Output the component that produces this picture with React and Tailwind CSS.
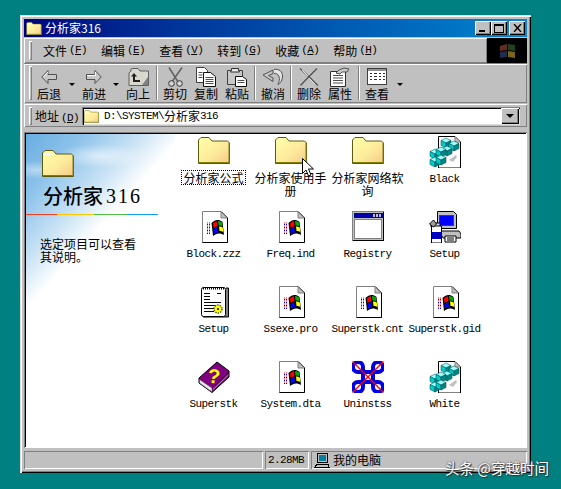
import React from "react";

const CJK = "font-['Noto_Sans_CJK_SC',sans-serif]";
const raised = "shadow-[inset_1px_1px_0_#fff,inset_-1px_-1px_0_#808080]";
const sunken = "shadow-[inset_1px_1px_0_#808080,inset_-1px_-1px_0_#fff]";

// latin text in the old bitmap-ish look
const L = ({ children, className = "" }) => (
  <span className={`font-['Liberation_Mono',monospace] text-[11px] tracking-[-0.6px] ${className}`}>{children}</span>
);

const FolderIcon = ({ w = 32, h = 27, id = "f" }) => (
  <svg width={w} height={h} viewBox="0 0 32 27">
    <defs>
      <linearGradient id={id} x1="0" y1="0" x2="1" y2="1">
        <stop offset="0" stopColor="#ffffa8" />
        <stop offset="0.55" stopColor="#fdeb9c" />
        <stop offset="1" stopColor="#f6c98a" />
      </linearGradient>
    </defs>
    <path d="M.5 26.5V3L3 .5h8l3 3.500h15.500l2 2v20.500z" fill={`url(#${id})`} stroke="#5a5a10" />
    <path d="M1 25.500h30M31 6v20" stroke="#808000" />
    <path d="M1.500 4.500h9" stroke="#fff" />
  </svg>
);

const Flag = () => (
  <g>
    <path d="M5 11h3M5 14h3M5 17h3M5 20h3" stroke="#f00" strokeWidth="1" strokeDasharray="1 1" />
    <path d="M5 12.500h4M5 15.500h4M5 18.500h4M5 21.500h4" stroke="#00f" strokeWidth="1" strokeDasharray="1 1" />
    <path d="M9.500 11c2-2 4-3 6-3s3 .5 5 2l1.500 13c-2-1-3-1.500-5-1.500s-4 1-6 2.500z" fill="#000" />
    <path d="M11 11.500c1-1 2-1.800 4-2.200l.5 5c-1.500 .3-3 1-4 1.700z" fill="#f00" />
    <path d="M16 9c1.500 0 2.500 .5 4 1.500l.5 4c-1.500-.8-2.500-1-4-1z" fill="#0a0" />
    <path d="M11.500 17c1-.8 2.500-1.300 4-1.700l.5 5c-1.500 .2-3 .8-4 1.500z" fill="#00f" />
    <path d="M17 14.500c1.500 0 2.500 .3 3.800 1l.5 4.500c-1.300-.6-2.300-1-3.800-1z" fill="#ff0" />
  </g>
);

const DocIcon = () => (
  <svg width="32" height="32" viewBox="0 0 32 32">
    <path d="M4.500 .5H23L29.500 7v24.500H4.500z" fill="#fff" stroke="#808080" />
    <path d="M29.500 7v24.500H4.500M23 .5L29.500 7" stroke="#000" fill="none" />
    <path d="M23 1v6h6" fill="#c0c0c0" stroke="#808080" />
    <g transform="translate(4 1)"><Flag /></g>
  </svg>
);

const Cube = ({ x, y }) => (
  <g transform={`translate(${x} ${y})`}>
    <path d="M5 0l5 2.500L5 5 0 2.500z" fill="#9ff" stroke="#004040" strokeWidth=".5" />
    <path d="M0 2.500L5 5v5L0 7.500z" fill="#0cc" stroke="#004040" strokeWidth=".5" />
    <path d="M10 2.500L5 5v5l5-2.500z" fill="#088" stroke="#004040" strokeWidth=".5" />
  </g>
);

const RegIcon = () => (
  <svg width="32" height="32" viewBox="0 0 32 32">
    <path d="M9.500 .5H26L31.500 6v26H9.500z" fill="#fff" stroke="#000" />
    <path d="M26 1v5h5" fill="#c0c0c0" stroke="#808080" />
    <path d="M20 24l7-5 1 2-4 5z" fill="#c0c0c0" />
    <Cube x={12} y={2} />
    <Cube x={20} y={5} />
    <Cube x={13} y={10} />
    <Cube x={1} y={13} />
    <Cube x={7} y={11} />
    <Cube x={1} y={21} />
    <Cube x={7} y={19} />
  </svg>
);

const WindowIcon = () => (
  <svg width="32" height="32" viewBox="0 0 32 32" shapeRendering="crispEdges">
    <rect x=".5" y=".5" width="31" height="29" fill="#c0c0c0" stroke="#808080" />
    <rect x="1.500" y="2" width="29" height="5" fill="#0000a8" />
    <rect x="21" y="3" width="2" height="3" fill="#c0c0c0" />
    <rect x="24" y="3" width="2" height="3" fill="#c0c0c0" />
    <rect x="27" y="3" width="2" height="3" fill="#c0c0c0" />
    <rect x="2.500" y="8.500" width="27" height="19" fill="#fff" stroke="#808080" />
    <path d="M31.500 1v29M1 29.500h31" stroke="#000" />
  </svg>
);

const SetupPcIcon = () => (
  <svg width="32" height="32" viewBox="0 0 32 32">
    <path d="M8.500 .5h16l3 3v14h-19z" fill="#c0c0c0" stroke="#000" />
    <rect x="10.500" y="4.500" width="14" height="10" fill="#0000ff" stroke="#404040" />
    <path d="M10 20h20l2 3v4H14z" fill="#c0c0c0" stroke="#000" />
    <path d="M16 25h11v6H16z" fill="#fff" stroke="#000" />
    <path d="M18 27h7M18 29h7" stroke="#000" />
    <path d="M2 12h9v4H2z" fill="#d8d8d8" stroke="#000" />
    <path d="M2.500 15h10v17H2.500z" fill="#fff" stroke="#000" />
    <path d="M3 21h9v7H3z" fill="#0000c0" />
    <path d="M0.500 13l4-4 3 4-3 3z" fill="#a0a0a0" stroke="#000" />
  </svg>
);

const NoteIcon = () => (
  <svg width="32" height="32" viewBox="0 0 32 32">
    <path d="M28 2h2.500v29H5" fill="#808080" stroke="#000" />
    <rect x="3.500" y="1.500" width="24" height="29" rx="2" fill="#fff" stroke="#000" />
    <path d="M5 2.500h21" stroke="#000" strokeDasharray="1 1" strokeWidth="2" />
    <path d="M6 7.500h6M19 7.500h4M6 10.500h6M6 13.500h6M6 16.500h17M6 19.500h12M6 22.500h10M6 25.500h10" stroke="#000" />
    <circle cx="20" cy="23" r="4" fill="#ff0" stroke="#606000" strokeDasharray="1.500 1" strokeWidth="1.500" />
    <circle cx="20" cy="23" r="1" fill="#000" />
  </svg>
);

const BookIcon = () => (
  <svg width="32" height="32" viewBox="0 0 32 32">
    <path d="M1 17L19 1l12 9v6L14 31.500 1 22z" fill="#800080" stroke="#000" />
    <path d="M1.500 18.500l12.500 8.500v4L1.500 22z" fill="#e8e8e8" stroke="#404040" strokeWidth=".5" />
    <path d="M14 27l17-16" stroke="#300030" />
    <path d="M15 28.500L30.500 14" stroke="#c080c0" />
    <text x="10" y="22" fill="#ffff00" fontFamily="Liberation Sans, sans-serif" fontWeight="700" fontSize="20" transform="rotate(6 15 14)">?</text>
  </svg>
);

const KnotIcon = () => (
  <svg width="32" height="32" viewBox="0 0 32 32">
    <g fill="none" stroke="#0000e0" strokeWidth="4">
      <path d="M11 6v20M21 6v20M6 11h20M6 21h20" />
      <path d="M11 6a5 5 0 1 0-5 5M21 6a5 5 0 1 1 5 5M11 26a5 5 0 1 1-5-5M21 26a5 5 0 1 0 5-5" />
    </g>
    <path d="M.5 .5l31 31M31.500 .5l-31 31" stroke="#ff0000" strokeWidth="1.400" />
  </svg>
);

const tools = {
  back: (
    <svg width="16" height="14" viewBox="0 0 16 14">
      <path d="M7 .5L.8 7 7 13.500V9.500h8.500v-5H7z" fill="#c8c8c8" stroke="#505050" />
      <path d="M7 2L2.500 7" stroke="#fff" />
    </svg>
  ),
  forward: (
    <svg width="16" height="14" viewBox="0 0 16 14">
      <path d="M9 .5L15.200 7 9 13.500V9.500H.5v-5H9z" fill="#c8c8c8" stroke="#505050" />
      <path d="M1 5.500h8.500V2" stroke="#fff" fill="none" />
    </svg>
  ),
  up: (
    <svg width="21" height="18" viewBox="0 0 21 18">
      <path d="M1 17.500V5l2-2V1l2-.5h5L12 3h8.500v14.500z" fill="#d8d8cc" stroke="#606060" />
      <path d="M14 17l6-8v8z" fill="#808080" />
      <path d="M6 5L3 8.500h2V14h7v-2H7V8.500h2z" fill="#202020" />
    </svg>
  ),
  cut: (
    <svg width="17" height="20" viewBox="0 0 17 20">
      <path d="M2 .5l8.500 13.500M15 .5L5.500 14" stroke="#606060" strokeWidth="1.500" fill="none" />
      <circle cx="4.500" cy="16.500" r="2.800" fill="#d8d8d8" stroke="#303030" />
      <circle cx="12.500" cy="16.500" r="2.800" fill="#d8d8d8" stroke="#303030" />
    </svg>
  ),
  copy: (
    <svg width="20" height="20" viewBox="0 0 20 20">
      <path d="M.5 .5h8l3 3v12H.5z" fill="#fff" stroke="#404040" />
      <path d="M7.500 5.500h7l5 4v10h-12z" fill="#fff" stroke="#101010" />
      <path d="M2.500 5.500h4M2.500 8h4M2.500 10.500h4M9.500 10.500h8M9.500 12.500h8M9.500 14.500h8M9.500 16.500h8" stroke="#505050" />
    </svg>
  ),
  paste: (
    <svg width="20" height="20" viewBox="0 0 20 20">
      <path d="M.5 3.500h15v14H.5z" fill="#c8c8c8" stroke="#404040" />
      <path d="M4.500 3V1.500h7V3l1 2h-9z" fill="#e8e8e8" stroke="#303030" />
      <path d="M8.500 9.500h7l4 3v7H8.500z" fill="#fff" stroke="#101010" />
      <path d="M10.500 13.500h7M10.500 15.500h7" stroke="#505050" />
    </svg>
  ),
  undo: (
    <svg width="22" height="18" viewBox="0 0 22 18">
      <path d="M12 1.500c5-1 8.500 2 8.500 6.500s-2 7-4.500 8.500c1-3 2-5 1-8-1-2.500-3-3.500-5-3" fill="#e4e4e4" stroke="#505050" />
      <path d="M1 7l10-5v3.500L6.500 7.500 11 10v3.500z" fill="#c8c8c8" stroke="#505050" />
    </svg>
  ),
  del: (
    <svg width="20" height="18" viewBox="0 0 20 18">
      <path d="M1 .5l9 8.200 9 8.800M18 .5L10 8.500 1.500 17.500" stroke="#505050" strokeWidth="1.200" fill="none" />
      <path d="M3 2l6 6M10 10l6 6" stroke="#e0e0e0" fill="none" />
    </svg>
  ),
  props: (
    <svg width="20" height="20" viewBox="0 0 20 20">
      <path d="M.5 4.500h15v15H.5z" fill="#fff" stroke="#303030" />
      <path d="M3 8.500h10M3 11h10M3 13.500h10M3 16h10" stroke="#505050" />
      <path d="M6 6l3-3 5-2 5 1-2 3-5 0-2 2z" fill="#c8c8c8" stroke="#505050" />
    </svg>
  ),
  views: (
    <svg width="20" height="18" viewBox="0 0 20 18" shapeRendering="crispEdges">
      <rect x=".5" y=".5" width="19" height="16" fill="#fff" stroke="#404040" />
      <rect x="1" y="1" width="18" height="2" fill="#909090" />
      <path d="M3 5.500h2M7 5.500h3M12 5.500h2M16 5.500h2M3 8.500h2M7 8.500h3M12 8.500h2M16 8.500h2M3 11.500h2M7 11.500h3M12 11.500h2M16 11.500h2" stroke="#303030" />
    </svg>
  ),
};

const Grip = ({ className = "" }) => (
  <div className={`w-[3px] shrink-0 ${raised} ${className}`} />
);

const Caret = ({ className = "" }) => (
  <div className={`w-0 h-0 border-x-[3px] border-x-transparent border-t-[3px] border-t-black ${className}`} />
);

const Sep = ({ w }) => (
  <div className={`${w} flex justify-center shrink-0`}>
    <div className="w-[2px] h-[34px] border-l border-l-[#808080] border-r border-r-white" />
  </div>
);

const ToolBtn = ({ w, icon, label }) => (
  <div className={`${w} flex flex-col items-center shrink-0`}>
    <div className="h-[22px] flex items-center justify-center">{tools[icon]}</div>
    <div className="text-[12px] leading-[13px] -mt-[1px] text-black">{label}</div>
  </div>
);

const DropArrow = ({ w }) => (
  <div className={`${w} flex justify-center pt-[17px] shrink-0`}>
    <Caret />
  </div>
);

const menus = [
  ["文件", "F"],
  ["编辑", "E"],
  ["查看", "V"],
  ["转到", "G"],
  ["收藏", "A"],
  ["帮助", "H"],
];

const files = [
  { name: "分析家公式", icon: "folder", selected: true },
  { name: "分析家使用手册", icon: "folder" },
  { name: "分析家网络软询", icon: "folder" },
  { name: "Black", icon: "reg" },
  { name: "Block.zzz", icon: "doc" },
  { name: "Freq.ind", icon: "doc" },
  { name: "Registry", icon: "window" },
  { name: "Setup", icon: "pc" },
  { name: "Setup", icon: "note" },
  { name: "Ssexe.pro", icon: "doc" },
  { name: "Superstk.cnt", icon: "doc" },
  { name: "Superstk.gid", icon: "doc" },
  { name: "Superstk", icon: "book" },
  { name: "System.dta", icon: "doc" },
  { name: "Uninstss", icon: "knot" },
  { name: "White", icon: "reg" },
];

const FileIcon = ({ type, index }) => {
  if (type === "folder")
    return (
      <div className="pt-[1px]">
        <FolderIcon id={`folder-${index}`} />
      </div>
    );
  if (type === "doc") return <DocIcon />;
  if (type === "reg") return <RegIcon />;
  if (type === "window") return <WindowIcon />;
  if (type === "pc") return <SetupPcIcon />;
  if (type === "note") return <NoteIcon />;
  if (type === "book") return <BookIcon />;
  return <KnotIcon />;
};

const FileItem = ({ file, index }) => {
  const latin = /^[A-Za-z.]+$/.test(file.name);
  return (
    <div className="flex flex-col items-center h-[75px] pt-[1px]">
      <div className="h-[32px] flex items-start justify-center">
        <FileIcon type={file.icon} index={index} />
      </div>
      <div
        className={`text-center leading-[13px] text-[12px] text-black ${
          file.selected ? "outline-1 outline-dotted outline-black px-[1px]" : ""
        } ${latin ? "mt-[2px]" : "mt-[3px] max-w-[74px]"}`}
      >
        {latin ? <L>{file.name}</L> : file.name}
      </div>
    </div>
  );
};

export default function App() {
  return (
    <div className={`relative w-[561px] h-[489px] overflow-hidden bg-[#008080] pt-[15px] pl-[20px] ${CJK}`}>
      <div className="w-[511px] h-[458px] bg-[#c0c0c0] p-[4px] flex flex-col shadow-[inset_1px_1px_0_#dfdfdf,inset_2px_2px_0_#fff,inset_-1px_-1px_0_#000,inset_-2px_-2px_0_#808080]">
        {/* title bar */}
        <div className="h-[18px] shrink-0 flex items-center pl-[2px] pr-[2px] bg-gradient-to-r from-[#000080] to-[#1084d0]">
          <FolderIcon w={16} h={13} id="title-folder" />
          <span className="ml-[3px] text-white text-[12px] leading-none">分析家316</span>
          <div className="ml-auto flex">
            {["min", "max", "close"].map((b) => (
              <div
                key={b}
                className={`w-[16px] h-[14px] bg-[#c0c0c0] flex items-center justify-center ${
                  b === "close" ? "ml-[2px]" : ""
                } shadow-[inset_1px_1px_0_#fff,inset_-1px_-1px_0_#000,inset_-2px_-2px_0_#808080]`}
              >
                {b === "min" && <div className="w-[6px] h-[2px] bg-black mt-[6px] -ml-[2px]" />}
                {b === "max" && <div className="w-[10px] h-[9px] border border-black border-t-2" />}
                {b === "close" && (
                  <svg width="9" height="8" viewBox="0 0 9 8">
                    <path d="M1 0l7 8M8 0L1 8" stroke="#000" strokeWidth="1.400" />
                  </svg>
                )}
              </div>
            ))}
          </div>
        </div>

        {/* menu bar */}
        <div className="h-[26px] shrink-0 mt-[1px] flex border-b border-b-[#808080]">
          <div className={`flex-1 flex items-center pl-[5px] ${raised}`}>
            <Grip className="h-[19px]" />
            <div className="flex gap-[14px] ml-[11px]">
              {menus.map(([name, key]) => (
                <div key={key} className="text-[12px] text-black flex items-center whitespace-nowrap">
                  {name}
                  <L className="ml-[2px]">
                    (<span className="underline">{key}</span>)
                  </L>
                </div>
              ))}
            </div>
          </div>
          <div className="w-[40px] h-[25px] bg-black flex items-center justify-center">
            <svg width="19" height="16" viewBox="0 0 19 16" opacity="0.7">
              <path d="M2 3l7-2v6l-7 1z" fill="#904030" />
              <path d="M10 1l7 1v6l-7-1z" fill="#306030" />
              <path d="M2 9l7-1v6l-7 1z" fill="#304070" />
              <path d="M10 8l7 1v6l-7-1z" fill="#b09020" />
            </svg>
          </div>
        </div>

        {/* toolbar */}
        <div className={`h-[39px] shrink-0 flex items-start pl-[5px] pt-[2px] ${raised}`}>
          <Grip className="h-[34px]" />
          <ToolBtn w="w-[34px]" icon="back" label="后退" />
          <DropArrow w="w-[12px]" />
          <ToolBtn w="w-[32px]" icon="forward" label="前进" />
          <DropArrow w="w-[12px]" />
          <ToolBtn w="w-[32px]" icon="up" label="向上" />
          <Sep w="w-[6px]" />
          <ToolBtn w="w-[30px]" icon="cut" label="剪切" />
          <ToolBtn w="w-[32px]" icon="copy" label="复制" />
          <ToolBtn w="w-[30px]" icon="paste" label="粘贴" />
          <Sep w="w-[6px]" />
          <ToolBtn w="w-[30px]" icon="undo" label="撤消" />
          <Sep w="w-[6px]" />
          <ToolBtn w="w-[30px]" icon="del" label="删除" />
          <ToolBtn w="w-[32px]" icon="props" label="属性" />
          <Sep w="w-[6px]" />
          <ToolBtn w="w-[30px]" icon="views" label="查看" />
          <DropArrow w="w-[16px]" />
        </div>

        {/* address bar */}
        <div className={`h-[23px] shrink-0 mt-[1px] flex items-start pt-[3px] pl-[5px] pr-[7px] ${raised}`}>
          <Grip className="h-[18px]" />
          <div className="ml-[3px] w-[47px] text-[12px] leading-[18px] text-black whitespace-nowrap">
            地址<L className="ml-[2px]">(<span className="underline">D</span>)</L>
          </div>
          <div className="flex-1 h-[18px] bg-white flex items-center pl-[2px] shadow-[inset_1px_1px_0_#808080,inset_2px_2px_0_#000,inset_-1px_-1px_0_#dfdfdf]">
            <FolderIcon w={15} h={13} id="addr-folder" />
            <span className="ml-[5px] text-[12px] text-black flex items-center">
              <L>D:\SYSTEM\</L>分析家<L>316</L>
            </span>
            <div className="ml-auto w-[18px] h-[16px] mr-[1px] bg-[#c0c0c0] flex items-center justify-center shadow-[inset_1px_1px_0_#fff,inset_-1px_-1px_0_#000,inset_-2px_-2px_0_#808080]">
              <div className="w-0 h-0 border-x-[4px] border-x-transparent border-t-[4px] border-t-black" />
            </div>
          </div>
        </div>

        {/* content */}
        <div className={`h-[316px] shrink-0 mt-[5px] p-[1px] flex ${sunken}`}>
          <div className="flex-1 flex bg-white border-l border-t border-black">
            <aside className="w-[149px] shrink-0 bg-[radial-gradient(ellipse_46px_12px_at_75px_22px,#ffffff90,transparent),radial-gradient(ellipse_30px_9px_at_10px_36px,#ffffff70,transparent),linear-gradient(132deg,#68ade1_0,#8cc2ea_42px,#c8e2f5_85px,#ffffff_118px)]">
              <div className="pl-[16px] pt-[16px]">
                <FolderIcon id="panel-folder" />
              </div>
              <div className="pl-[17px] mt-[8px] h-[22px] flex items-center text-[20px] leading-[22px] font-medium text-black">
                分析家<span className="ml-[3px] font-['Liberation_Serif',serif] font-normal tracking-[2px]">316</span>
              </div>
              <div className="mt-[7px] flex h-[1px]">
                <div className="w-[31px] bg-[#f04020]" />
                <div className="w-[37px] bg-[#ffc800]" />
                <div className="w-[33px] bg-[#50c040]" />
                <div className="w-[31px] bg-[#10a0f0]" />
              </div>
              <div className="pl-[14px] mt-[22px] w-[118px] text-[12px] leading-[13px] text-black">
                选定项目可以查看其说明。
              </div>
            </aside>
            <div className="flex-1 grid grid-cols-[repeat(4,77px)] content-start pt-[1px]">
              {files.map((f, i) => (
                <FileItem key={i} file={f} index={i} />
              ))}
            </div>
          </div>
        </div>

        {/* status bar */}
        <div className="h-[18px] shrink-0 mt-[3px] flex gap-[2px] text-[12px] text-black">
          <div className={`w-[239px] ${sunken}`} />
          <div className={`w-[44px] flex items-center pl-[3px] ${sunken}`}>
            <L>2.28MB</L>
          </div>
          <div className={`flex-1 flex items-center pl-[3px] ${sunken}`}>
            <svg width="16" height="15" viewBox="0 0 16 15" shapeRendering="crispEdges">
              <rect x="3.500" y=".5" width="10" height="9" fill="#c0c0c0" stroke="#000" />
              <rect x="5" y="2" width="7" height="6" fill="#0080a0" />
              <path d="M1 14l2-3h11l1 3z" fill="#c0c0c0" stroke="#000" />
            </svg>
            <span className="ml-[3px]">我的电脑</span>
          </div>
        </div>
      </div>

      {/* mouse cursor */}
      <svg className="absolute left-[302px] top-[158px]" width="12" height="19" viewBox="0 0 12 19">
        <path d="M.5 .5v15l3.500-3.500 2.500 6 2.500-1-2.500-6h5z" fill="#fff" stroke="#000" />
      </svg>

      {/* watermark */}
      <div className="absolute left-[445px] top-[459px] text-[14.500px] leading-[18px] text-white whitespace-nowrap [text-shadow:0_0_2px_#333,1px_1px_1px_#333]">
        头条 @穿越时间
      </div>
    </div>
  );
}
